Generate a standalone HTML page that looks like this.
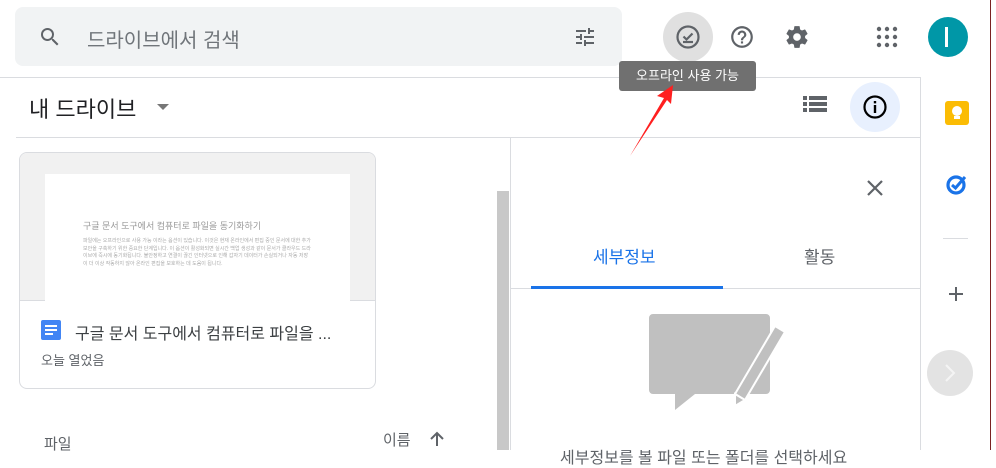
<!DOCTYPE html>
<html><head><meta charset="utf-8"><style>
*{margin:0;padding:0;box-sizing:border-box}
body{width:996px;height:450px;overflow:hidden;background:#fff;font-family:"Liberation Sans","Noto Sans CJK KR",sans-serif;position:relative;color:#202124}
.a{position:absolute}
</style></head><body>
<div class="a" style="left:15px;top:7px;width:607px;height:59px;background:#f1f3f4;border-radius:8px"></div>
<svg class="a" style="left:38px;top:25px" width="24" height="24" viewBox="0 0 24 24"><path fill="#5f6368" d="M15.5 14h-.79l-.28-.27A6.47 6.47 0 0 0 16 9.5 6.5 6.5 0 1 0 9.5 16c1.61 0 3.09-.59 4.23-1.57l.27.28v.79l5 4.99L20.49 19l-4.99-5zm-6 0C7.01 14 5 11.99 5 9.5S7.01 5 9.5 5 14 7.01 14 9.5 11.99 14 9.5 14z"/></svg>
<div class="a" style="left:87px;top:24px;font-size:20px;color:#70757a">드라이브에서 검색</div>
<svg class="a" style="left:573px;top:25px" width="24" height="24" viewBox="0 0 24 24"><path fill="#5f6368" d="M3 17v2h6v-2H3zM3 5v2h10V5H3zm10 16v-2h8v-2h-8v-2h-2v6h2zM7 9v2H3v2h4v2h2V9H7zm14 4v-2H11v2h10zm-6-4h2V7h4V5h-4V3h-2v6z"/></svg>
<div class="a" style="left:663px;top:12px;width:50px;height:50px;border-radius:50%;background:#e0e0e0"></div>
<svg class="a" style="left:675px;top:24px" width="26" height="26" viewBox="0 0 26 26"><circle cx="13" cy="13" r="10.5" fill="none" stroke="#5f6368" stroke-width="2.2"/><path d="M8.5 12.5l3 3 6-6" fill="none" stroke="#5f6368" stroke-width="2.2"/><path d="M8 18h10" stroke="#5f6368" stroke-width="2.2"/></svg>
<svg class="a" style="left:729px;top:24px" width="26" height="26" viewBox="0 0 24 24"><path fill="#5f6368" d="M11 18h2v-2h-2v2zm1-16C6.48 2 2 6.48 2 12s4.480 10 10 10 10-4.48 10-10S17.52 2 12 2zm0 18c-4.41 0-8-3.59-8-8s3.59-8 8-8 8 3.59 8 8-3.59 8-8 8zm0-14c-2.21 0-4 1.79-4 4h2c0-1.1.9-2 2-2s2 .9 2 2c0 2-3 1.75-3 5h2c0-2.25 3-2.5 3-5 0-2.21-1.79-4-4-4z"/></svg>
<svg class="a" style="left:784px;top:24px" width="26" height="26" viewBox="0 0 24 24"><path fill="#5f6368" d="M19.43 12.98c.04-.32.07-.64.07-.98s-.03-.66-.07-.98l2.11-1.65c.19-.15.24-.42.12-.64l-2-3.46c-.12-.22-.39-.3-.61-.22l-2.49 1c-.52-.4-1.08-.73-1.690-.98l-.38-2.65A.49.49 0 0 0 14 2h-4c-.25 0-.46.18-.49.42l-.38 2.650c-.61.25-1.17.59-1.69.98l-2.49-1a.5.5 0 0 0-.61.22l-2 3.46c-.13.22-.07.49.12.64l2.11 1.65c-.04.32-.07.65-.07.98s.03.66.07.98l-2.11 1.65c-.19.15-.24.42-.12.64l2 3.46c.12.22.39.3.61.22l2.49-1c.52.4 1.08.73 1.69.98l.38 2.65c.03.24.24.42.49.42h4c.25 0 .46-.18.49-.42l.38-2.65c.61-.25 1.17-.59 1.69-.98l2.49 1c.23.09.49 0 .61-.22l2-3.46c.12-.22.07-.49-.12-.64l-2.11-1.65zM12 15.5c-1.93 0-3.5-1.57-3.5-3.5s1.57-3.5 3.5-3.5 3.5 1.57 3.5 3.5-1.57 3.5-3.5 3.5z"/><circle cx="12" cy="12" r="2" fill="#fff"/></svg>
<svg class="a" style="left:876px;top:26px" width="22" height="22" viewBox="0 0 22 22" fill="#5f6368"><circle cx="3" cy="3" r="2.2"/><circle cx="11" cy="3" r="2.2"/><circle cx="19" cy="3" r="2.2"/><circle cx="3" cy="11" r="2.2"/><circle cx="11" cy="11" r="2.2"/><circle cx="19" cy="11" r="2.2"/><circle cx="3" cy="19" r="2.2"/><circle cx="11" cy="19" r="2.2"/><circle cx="19" cy="19" r="2.2"/></svg>
<div class="a" style="left:928px;top:17px;width:40px;height:40px;border-radius:50%;background:#0097a7"></div>
<div class="a" style="left:945px;top:27px;width:3px;height:20px;background:#fff"></div>
<div class="a" style="left:0;top:77px;width:920px;height:1px;background:#dadce0"></div>
<div class="a" style="left:16px;top:137px;width:904px;height:1px;background:#dadce0"></div>
<div class="a" style="left:920px;top:77px;width:1px;height:373px;background:#dadce0"></div>
<div class="a" style="left:990px;top:0;width:1px;height:450px;background:#7a2222"></div>
<div class="a" style="left:29px;top:92px;font-size:22px;color:#202124">내 드라이브</div>
<div class="a" style="left:157px;top:104px;width:0;height:0;border-left:6px solid transparent;border-right:6px solid transparent;border-top:6px solid #777"></div>
<svg class="a" style="left:803px;top:95px" width="24" height="22" viewBox="0 0 24 22" fill="#5f6368"><rect x="0" y="1" width="4" height="4"/><rect x="6" y="1" width="18" height="4"/><rect x="0" y="7" width="4" height="4"/><rect x="6" y="7" width="18" height="4"/><rect x="0" y="13" width="4" height="4"/><rect x="6" y="13" width="18" height="4"/></svg>
<div class="a" style="left:850px;top:82px;width:50px;height:50px;border-radius:50%;background:#e8f0fe"></div>
<svg class="a" style="left:862px;top:94px" width="26" height="26" viewBox="0 0 26 26"><circle cx="13" cy="13" r="10.5" fill="none" stroke="#000" stroke-width="2.2"/><rect x="11.8" y="11" width="2.4" height="8" fill="#000"/><rect x="11.8" y="7" width="2.4" height="2.4" fill="#000"/></svg>
<div class="a" style="left:619px;top:61px;width:137px;height:30px;background:#707070;border-radius:3px;color:#fff;font-size:13px;line-height:30px;text-align:center">오프라인 사용 가능</div>
<svg class="a" style="left:620px;top:80px" width="70" height="80" viewBox="0 0 70 80"><path d="M10 76 L44 18 L37 16 L53 5 L51 24 L47 20 Z" fill="#ff1f1f"/></svg>
<div class="a" style="left:19px;top:152px;width:357px;height:237px;border:1px solid #dadce0;border-radius:8px;overflow:hidden">
 <div style="height:148px;background:#f1f1f1;border-bottom:1px solid #dadce0;position:relative">
  <div class="a" style="left:25px;top:21px;width:305px;height:127px;background:#fff">
   <div class="a" style="left:38px;top:45px;font-size:9px;color:#999;white-space:nowrap">구글 문서 도구에서 컴퓨터로 파일을 동기화하기</div>
   <div class="a" style="left:38px;top:64px;width:228px;font-size:5px;line-height:7.5px;color:#aaa">파일에는 오프라인으로 사용 가능 이라는 옵션이 있습니다. 이것은 현재 온라인에서 편집 중인 문서에 대한 추가 보안을 구축하기 위한 중요한 단계입니다. 이 옵션이 활성화되면 실시간 백업 생성과 같이 문서가 클라우드 드라이브에 즉시에 동기화됩니다. 불안정하고 연결이 끊긴 인터넷으로 인해 갑자기 데이터가 손실되거나 자동 저장이 더 이상 작동하지 않아 온라인 편집을 보호하는 데 도움이 됩니다.</div>
  </div>
 </div>
</div>
<div class="a" style="left:41px;top:320px;width:20px;height:20px;background:#4285f4;border-radius:2px"></div>
<div class="a" style="left:45px;top:325px;width:12px;height:2px;background:#fff"></div>
<div class="a" style="left:45px;top:329px;width:12px;height:2px;background:#fff"></div>
<div class="a" style="left:45px;top:333px;width:8px;height:2px;background:#fff"></div>
<div class="a" style="left:75px;top:320px;font-size:16px;color:#3c4043;white-space:nowrap">구글 문서 도구에서 컴퓨터로 파일을 ...</div>
<div class="a" style="left:41px;top:350px;font-size:13px;color:#5f6368">오늘 열었음</div>
<div class="a" style="left:44px;top:433px;font-size:15px;color:#5f6368">파일</div>
<div class="a" style="left:383px;top:429px;font-size:15px;color:#5f6368">이름</div>
<svg class="a" style="left:428px;top:430px" width="18" height="18" viewBox="0 0 18 18"><path d="M9 16V3M3 9l6-6 6 6" fill="none" stroke="#5f6368" stroke-width="2"/></svg>
<div class="a" style="left:497px;top:191px;width:12px;height:259px;background:#c8c8c8"></div>
<div class="a" style="left:510px;top:137px;width:1px;height:313px;background:#dadce0"></div>
<svg class="a" style="left:866px;top:179px" width="18" height="18" viewBox="0 0 18 18"><path d="M2 2L16 16M16 2L2 16" stroke="#5f6368" stroke-width="2.2"/></svg>
<div class="a" style="left:593px;top:243px;font-size:17px;color:#1a73e8">세부정보</div>
<div class="a" style="left:804px;top:243px;font-size:17px;color:#5f6368">활동</div>
<div class="a" style="left:511px;top:288px;width:409px;height:1px;background:#dadce0"></div>
<div class="a" style="left:531px;top:286px;width:192px;height:3px;background:#1a73e8"></div>
<svg class="a" style="left:645px;top:310px" width="140" height="120" viewBox="0 0 140 120"><path d="M8 4h113a4 4 0 0 1 4 4v72a4 4 0 0 1-4 4H50L30 100V84H8a4 4 0 0 1-4-4V8a4 4 0 0 1 4-4z" fill="#c0c0c0"/><path d="M130 16l10 6-40 68-10-6z" fill="#c0c0c0" stroke="#fff" stroke-width="2"/><path d="M90 84l10 6-10 6z" fill="#c0c0c0" stroke="#fff" stroke-width="2"/></svg>
<div class="a" style="left:560px;top:444px;font-size:16px;color:#5f6368;white-space:nowrap">세부정보를 볼 파일 또는 폴더를 선택하세요</div>
<div class="a" style="left:945px;top:101px;width:24px;height:24px;background:#fbbc04;border-radius:3px"></div>
<div class="a" style="left:952px;top:106px;width:10px;height:10px;border-radius:50%;background:#fff"></div>
<div class="a" style="left:954px;top:116px;width:6px;height:3px;background:#fff"></div>
<svg class="a" style="left:945px;top:172px" width="24" height="24" viewBox="0 0 24 24"><circle cx="11" cy="13" r="8" fill="none" stroke="#1a73e8" stroke-width="3.2"/><path d="M7 13l3.5 3L20 5" fill="none" stroke="#1a73e8" stroke-width="3"/></svg>
<div class="a" style="left:943px;top:238px;width:25px;height:1px;background:#dadce0"></div>
<svg class="a" style="left:948px;top:286px" width="16" height="16" viewBox="0 0 16 16"><path d="M8 1v14M1 8h14" stroke="#5f6368" stroke-width="2"/></svg>
<div class="a" style="left:927px;top:350px;width:46px;height:46px;border-radius:50%;background:#e3e3e3"></div>
<svg class="a" style="left:943px;top:363px" width="14" height="20" viewBox="0 0 14 20"><path d="M3 2l8 8-8 8" fill="none" stroke="#f4f4f4" stroke-width="2"/></svg>
</body></html>
